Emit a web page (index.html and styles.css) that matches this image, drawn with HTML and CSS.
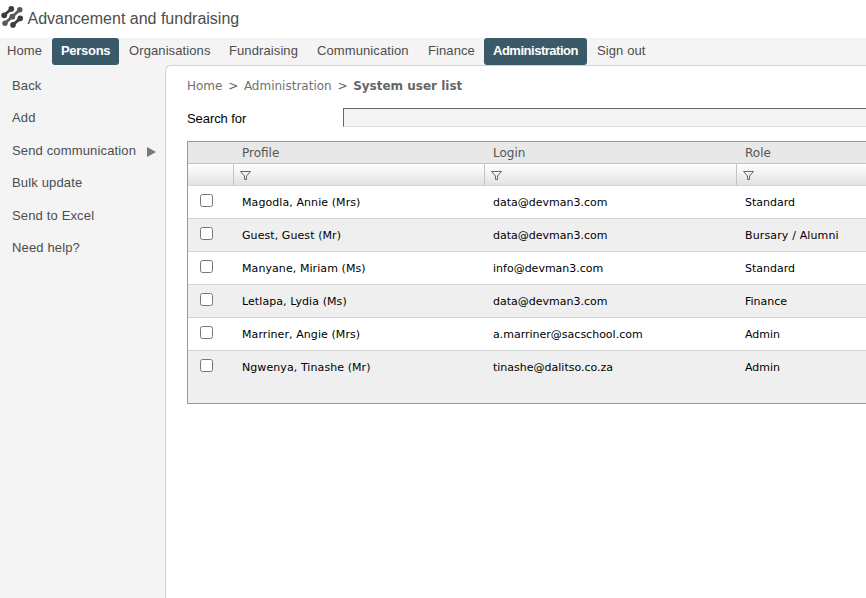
FILE: index.html
```html
<!DOCTYPE html>
<html lang="en">
<head>
<meta charset="utf-8">
<title>Advancement and fundraising</title>
<link rel="stylesheet" href="styles.css">
</head>
<body>
<header class="brand">
  <svg class="logo" viewBox="0 0 22 22" width="22" height="22" aria-hidden="true">
    <g stroke="#3c3c3c" stroke-width="2.8" fill="#3c3c3c">
      <path d="M3 9.2 10.3 3M12 18.8 19.3 12.4"/>
      <g stroke="none"><circle cx="10.3" cy="2.9" r="2.8"/><circle cx="3.2" cy="9.3" r="2.9"/>
      <circle cx="19.2" cy="12.4" r="2.8"/><circle cx="12" cy="18.9" r="2.8"/></g>
    </g>
    <g stroke="#585858" stroke-width="2.8" fill="#585858">
      <path d="M4 17.3 18.8 3.8"/>
      <g stroke="none"><circle cx="18.8" cy="3.7" r="2.7"/><circle cx="4" cy="17.3" r="2.7"/><circle cx="11.3" cy="10.7" r="2.9"/></g>
    </g>
  </svg>
  <span class="brand-name">Advancement and fundraising</span>
</header>
<nav class="tabs">
  <a class="tab">Home</a>
  <a class="tab active persons">Persons</a>
  <a class="tab">Organisations</a>
  <a class="tab">Fundraising</a>
  <a class="tab">Communication</a>
  <a class="tab">Finance</a>
  <a class="tab active admin">Administration</a>
  <a class="tab">Sign out</a>
</nav>
<div class="layout">
  <aside class="side">
    <a>Back</a>
    <a>Add</a>
    <a class="parent">Send communication<svg width="9" height="10" viewBox="0 0 9 10"><path d="M0 0 9 5 0 10z" fill="#777"/></svg></a>
    <a>Bulk update</a>
    <a>Send to Excel</a>
    <a>Need help?</a>
  </aside>
  <main class="content">
    <div class="crumbs"><span>Home</span><span class="sep">&gt;</span><span>Administration</span><span class="sep">&gt;</span><b>System user list</b></div>
    <div class="search"><label for="q">Search for</label><input id="q" type="text"></div>
    <div class="grid">
      <div class="row head"><span></span><span>Profile</span><span>Login</span><span>Role</span></div>
      <div class="row filter">
        <span></span>
        <span><svg class="funnel" viewBox="0 0 11 9"><path d="M.5.5h10L6.5 5v3.5h-2V5z"/></svg></span>
        <span><svg class="funnel" viewBox="0 0 11 9"><path d="M.5.5h10L6.5 5v3.5h-2V5z"/></svg></span>
        <span><svg class="funnel" viewBox="0 0 11 9"><path d="M.5.5h10L6.5 5v3.5h-2V5z"/></svg></span>
      </div>
      <div class="row"><span><input type="checkbox"></span><span class="name">Magodla, Annie (Mrs)</span><span>data@devman3.com</span><span>Standard</span></div>
      <div class="row"><span><input type="checkbox"></span><span class="name">Guest, Guest (Mr)</span><span>data@devman3.com</span><span class="wide">Bursary / Alumni</span></div>
      <div class="row"><span><input type="checkbox"></span><span class="name">Manyane, Miriam (Ms)</span><span>info@devman3.com</span><span>Standard</span></div>
      <div class="row"><span><input type="checkbox"></span><span class="name">Letlapa, Lydia (Ms)</span><span>data@devman3.com</span><span>Finance</span></div>
      <div class="row"><span><input type="checkbox"></span><span class="name">Marriner, Angie (Mrs)</span><span>a.marriner@sacschool.com</span><span>Admin</span></div>
      <div class="row last"><span><input type="checkbox"></span><span class="name">Ngwenya, Tinashe (Mr)</span><span>tinashe@dalitso.co.za</span><span>Admin</span></div>
    </div>
  </main>
</div>
</body>
</html>
```
FILE: styles.css
```css
* { box-sizing: border-box; }
body {
  margin: 0;
  height: 598px;
  display: flex;
  flex-direction: column;
  overflow: hidden;
  background: #f4f4f4;
  font: 13px/16px "Liberation Sans", Arial, sans-serif;
  color: #4d4d4d;
}
.brand {
  flex: none;
  display: flex;
  height: 38px;
  padding: 6px 0 0 1px;
  background: #fff;
}
.brand-name { margin: 3px 0 0 4.5px; font-size: 16px; line-height: 20px; }
.tabs {
  flex: none;
  height: 27px;
  display: grid;
  grid-template-columns: 53px 69px 100px 88px 111px 65px 104px 80px;
  margin-left: -2px;
}
.tab { padding: 5px 0 0 9px; white-space: nowrap; letter-spacing: .1px; }
.tab.active {
  background: #3a5a6a;
  color: #fff;
  font-weight: bold;
  border-radius: 3px;
}
.tab.persons { margin-left: 1px; width: 67px; letter-spacing: -.3px; }
.tab.admin { width: 103px; letter-spacing: -.48px; }
.layout { flex: 1; display: flex; }
.side {
  width: 165px;
  flex: none;
  display: flex;
  flex-direction: column;
  padding: 13px 0 0 12px;
}
.side a { height: 32.4px; letter-spacing: .15px; white-space: nowrap; }
.parent { display: flex; gap: 11px; }
.parent svg { margin-top: 4px; }
.content {
  flex: 1;
  min-width: 0;
  padding: 12px 0 0 21px;
  background: #fff;
  border: 1px solid #d3d3d3;
  border-width: 1px 0 0 1px;
  border-top-left-radius: 6px;
}
.crumbs {
  font: 12px/16px "DejaVu Sans", Verdana, sans-serif;
  color: #666;
  white-space: nowrap;
}
.crumbs span:not(.sep) { color: #707070; }
.crumbs .sep { margin: 0 5.7px; }
.search { display: flex; margin-top: 14px; height: 19px; color: #000; }
.search label { width: 156px; padding-top: 3px; letter-spacing: -.08px; }
.search input {
  flex: 1;
  min-width: 0;
  height: 19px;
  border: solid #666;
  border-width: 1px 0 1px 1px;
  border-bottom-color: #ddd;
  background: #f4f4f4;
}
.grid {
  margin-top: 14px;
  border: 1px solid #999;
  border-right: 0;
  font: 11px/14px "DejaVu Sans", Verdana, sans-serif;
  color: #000;
}
.row {
  height: 33px;
  display: grid;
  grid-template-columns: 45px 251px 252px 1fr;
  border-bottom: 1px solid #d3d3d3;
  white-space: nowrap;
  background: #fff;
}
.row:nth-child(even) { background: #efefef; }
.row > span { padding: 10px 0 0 9px; }
.row > span:first-child { padding: 8px 0 0 12px; }
.row input { display: block; width: 13px; height: 13px; margin: 0; }
.row .name { letter-spacing: .08px; }
.row .wide { letter-spacing: .14px; }
.row.head {
  height: 22px;
  background: #e8e8e8;
  border-color: #c4c4c4;
  font-size: 12px;
  color: #555;
}
.row.head > span { padding-top: 4px; }
.row.filter { height: 22px; background: linear-gradient(#fff, #e2e2e2); }
.row.filter > span + span { border-left: 1px solid #c4c4c4; padding: 7px 0 0 6px; }
.funnel { display: block; width: 11px; height: 9px; fill: none; stroke: #666; }
.row.last { height: 52px; border: 0; }
```
